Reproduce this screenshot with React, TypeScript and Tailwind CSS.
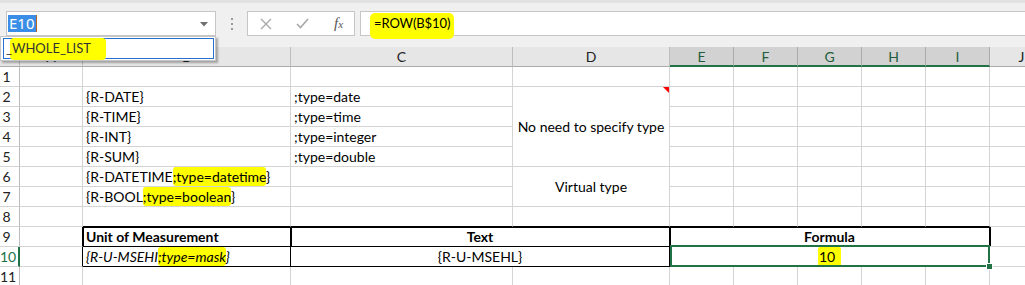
import React from "react";

const R = { g: "border-r border-r-[#d4d4d4]", k: "border-r border-r-black" };
const B = { g: "border-b border-b-[#d4d4d4]", k: "border-b border-b-black" };
const base =
  "h-full whitespace-nowrap px-[3px] text-[14px] leading-[19px] text-black font-['Lato',sans-serif]";

type CP = {
  r?: "g" | "k";
  b?: "g" | "k";
  className?: string;
  children?: React.ReactNode;
};

function C({ r = "g", b = "g", className = "overflow-hidden", children }: CP) {
  return <div className={`${base} ${R[r]} ${B[b]} ${className}`}>{children}</div>;
}

function HL({ children }: { children: React.ReactNode }) {
  return <span className="bg-[#ffff00] rounded-[3px] py-[1px]">{children}</span>;
}

function RH({ n, sel = false }: { n: number; sel?: boolean }) {
  return sel ? (
    <div className="h-full bg-white border-r-2 border-r-[#217346] border-b border-b-[#d4d4d4] text-center pr-[5px] text-[14px] leading-[19px] text-[#217346] font-['Lato',sans-serif]">
      {n}
    </div>
  ) : (
    <div className="h-full bg-white border-r border-r-[#bdbdbd] border-b border-b-[#d4d4d4] text-center pr-[6px] text-[14px] leading-[19px] text-[#222] font-['Lato',sans-serif]">
      {n}
    </div>
  );
}

function CH({ l, sel = false }: { l: string; sel?: boolean }) {
  return sel ? (
    <div className="h-full bg-[#d2d2d2] border-r border-r-[#ababab] border-b-2 border-b-[#217346] text-center pt-[2px] text-[14px] leading-[16px] text-[#1e5e3c] font-['Lato',sans-serif]">
      {l}
    </div>
  ) : (
    <div className="h-full bg-[#e6e6e6] border-r border-r-[#bdbdbd] border-b border-b-[#ababab] text-center pt-[2px] text-[14px] leading-[16px] text-[#222] font-['Lato',sans-serif]">
      {l}
    </div>
  );
}

function Tail({ count }: { count: number }) {
  return (
    <>
      {Array.from({ length: count }).map((_, i) => (
        <C key={i} />
      ))}
    </>
  );
}

export default function App() {
  return (
    <div className="relative w-[1025px] h-[285px] overflow-hidden bg-white">
      {/* Formula bar area */}
      <div className="h-[47px] bg-[#f0f0f0] border-t-[3px] border-t-[#e2e2e2] flex items-start pt-[8px]">
        {/* Name box */}
        <div className="ml-[6px] w-[210px] h-[25px] bg-white border border-[#c6c6c6] flex items-center relative">
          <div className="ml-[1px] h-[17px] bg-[#3b8ee6] text-white text-[15px] leading-[17px] px-[1px] font-['Noto_Sans',sans-serif]">
            E10
          </div>
          <div className="w-[1px] h-[17px] bg-[#b5651d]" />
          <svg className="absolute right-[7px] top-[10px]" width="8" height="5" viewBox="0 0 8 5">
            <path d="M0 0 L8 0 L4 4.5 Z" fill="#707070" />
          </svg>
        </div>
        {/* Dots */}
        <div className="w-[31px] h-[25px] flex flex-col items-center justify-center gap-[3px]">
          <div className="w-[2px] h-[2px] bg-[#9a9a9a]" />
          <div className="w-[2px] h-[2px] bg-[#9a9a9a]" />
          <div className="w-[2px] h-[2px] bg-[#9a9a9a]" />
        </div>
        {/* Function buttons */}
        <div className="w-[108px] h-[25px] bg-white border border-[#c6c6c6] flex items-center">
          <svg className="ml-[12px]" width="12" height="12" viewBox="0 0 12 12">
            <path d="M1 1 L11 11 M11 1 L1 11" stroke="#a8a8a8" strokeWidth="1.4" fill="none" />
          </svg>
          <svg className="ml-[24px]" width="13" height="11" viewBox="0 0 13 11">
            <path d="M1 6 L4.5 9.5 L12 1" stroke="#a8a8a8" strokeWidth="1.6" fill="none" />
          </svg>
          <span className="ml-[25px] italic text-[15px] leading-[15px] text-[#555] font-['Liberation_Serif',serif]">
            f<span className="text-[11px]">x</span>
          </span>
        </div>
        {/* Formula box */}
        <div className="ml-[5px] flex-1 h-[25px] bg-white border border-r-0 border-[#c6c6c6] relative">
          <div className="absolute left-[9px] top-[1px] w-[84px] h-[26px] bg-[#ffff00] rounded-[5px]" />
          <div className="relative pl-[13px] text-[13px] tracking-[-0.1px] leading-[23px] text-black font-['Lato',sans-serif]">
            =ROW(B$10)
          </div>
        </div>
      </div>

      {/* Grid */}
      <div className="grid grid-cols-[20px_63px_208px_222px_157px_64px_64px_64px_64px_64px_64px] grid-rows-[repeat(12,20px)]">
        {/* header */}
        <div className="h-full bg-[#e6e6e6] border-r border-r-[#bdbdbd] border-b border-b-[#ababab]" />
        <CH l="A" />
        <CH l="B" />
        <CH l="C" />
        <CH l="D" />
        <CH l="E" sel />
        <CH l="F" sel />
        <CH l="G" sel />
        <CH l="H" sel />
        <CH l="I" sel />
        <CH l="J" />

        {/* row 1 */}
        <RH n={1} />
        <Tail count={10} />

        {/* row 2 */}
        <RH n={2} />
        <C />
        <C>{"{R-DATE}"}</C>
        <C>;type=date</C>
        <div className="row-span-4 relative border-r border-r-[#d4d4d4] border-b border-b-[#d4d4d4] flex items-center justify-center whitespace-nowrap text-[14px] text-black font-['Lato',sans-serif]">
          No need to specify type
          <svg className="absolute right-0 top-0" width="6" height="6" viewBox="0 0 6 6">
            <path d="M0 0 L6 0 L6 6 Z" fill="#ff0000" />
          </svg>
        </div>
        <Tail count={6} />

        {/* row 3 */}
        <RH n={3} />
        <C />
        <C>{"{R-TIME}"}</C>
        <C>;type=time</C>
        <Tail count={6} />

        {/* row 4 */}
        <RH n={4} />
        <C />
        <C>{"{R-INT}"}</C>
        <C>;type=integer</C>
        <Tail count={6} />

        {/* row 5 */}
        <RH n={5} />
        <C />
        <C>{"{R-SUM}"}</C>
        <C>;type=double</C>
        <Tail count={6} />

        {/* row 6 */}
        <RH n={6} />
        <C />
        <C>
          {"{R-DATETIME"}
          <HL>;type=datetime</HL>
          {"}"}
        </C>
        <C />
        <div className="row-span-2 border-r border-r-[#d4d4d4] border-b border-b-[#d4d4d4] flex items-center justify-center whitespace-nowrap text-[14px] text-black font-['Lato',sans-serif]">
          Virtual type
        </div>
        <Tail count={6} />

        {/* row 7 */}
        <RH n={7} />
        <C />
        <C>
          {"{R-BOOL"}
          <HL>;type=boolean</HL>
          {"}"}
        </C>
        <C />
        <Tail count={6} />

        {/* row 8 */}
        <RH n={8} />
        <C />
        <C b="k" />
        <C b="k" />
        <C b="k" />
        <C b="k" />
        <C b="k" />
        <C b="k" />
        <C b="k" />
        <C b="k" />
        <C />

        {/* row 9 */}
        <RH n={9} />
        <C r="k" />
        <C r="k" b="k" className="overflow-hidden font-bold shadow-[inset_1px_1px_0_0_#000]">
          Unit of Measurement
        </C>
        <C r="k" b="k" className="col-span-2 overflow-hidden text-center font-bold shadow-[inset_1px_1px_0_0_#000]">
          Text
        </C>
        <C r="k" b="k" className="col-span-5 overflow-hidden text-center font-bold shadow-[inset_1px_1px_0_0_#000]">
          Formula
        </C>
        <C className="overflow-hidden shadow-[inset_1px_0_0_0_#000]" />

        {/* row 10 */}
        <RH n={10} sel />
        <C r="k" />
        <C r="k" b="k" className="overflow-hidden italic">
          {"{R-U-MSEHI"}
          <HL>;type=mask</HL>
          {"}"}
        </C>
        <C r="k" b="k" className="col-span-2 overflow-hidden text-center">
          {"{R-U-MSEHL}"}
        </C>
        <C r="k" b="k" className="col-span-5 relative overflow-visible text-center z-10">
          <span className="bg-[#ffff00] rounded-[2px] pl-[1px] pr-[6px] py-[1px]">10</span>
          <div className="absolute -top-[2px] left-0 -right-[1px] -bottom-[1px] border-2 border-[#217346]" />
          <div className="absolute -right-[4px] -bottom-[4px] w-[7px] h-[7px] bg-[#217346] border border-white" />
        </C>
        <C />

        {/* row 11 */}
        <RH n={11} />
        <Tail count={10} />
      </div>

      {/* Name box dropdown */}
      <div className="absolute left-0 top-[36px] w-[216px] h-[25px] bg-white border border-[#c6c6c6] shadow-[2px_2px_2px_rgba(0,0,0,0.3)] z-20 p-[1px] pl-[2px]">
        <div className="relative h-full border border-[#2770d2]">
          <div className="absolute left-[6px] -top-[1px] w-[96px] h-[22px] bg-[#ffff00] rounded-[4px]" />
          <div className="relative pl-[2px] text-[13px] leading-[19px] text-[#333] font-['Lato',sans-serif]">
            _WHOLE_LIST
          </div>
        </div>
      </div>
    </div>
  );
}
